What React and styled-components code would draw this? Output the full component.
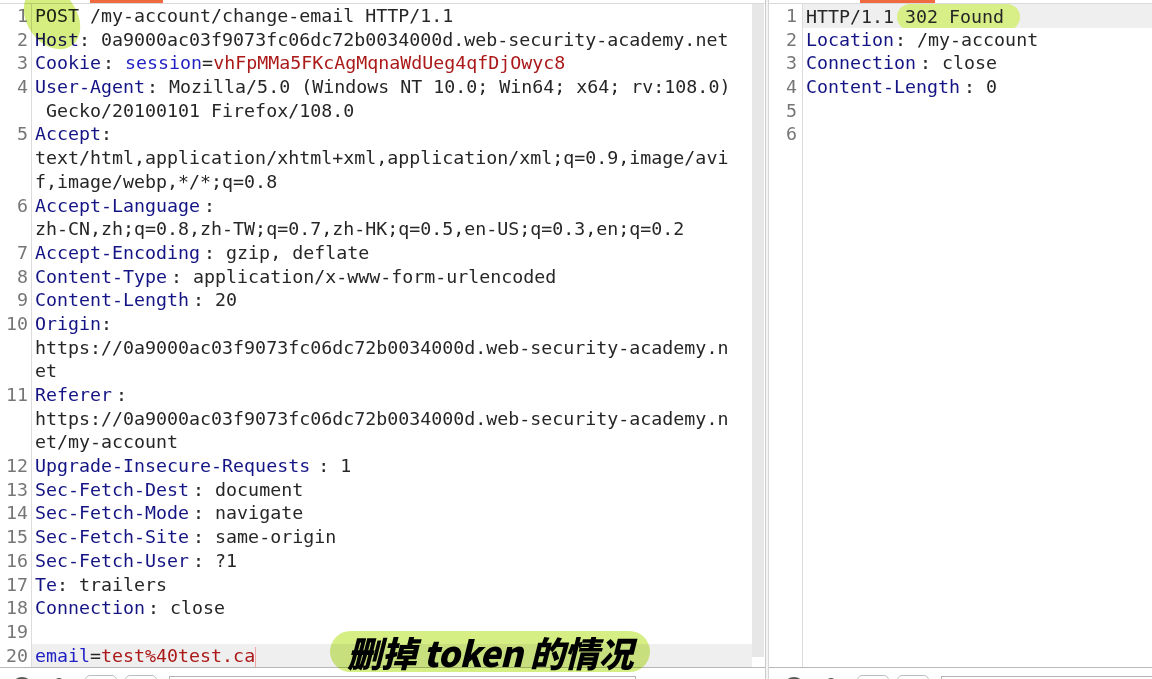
import React from "react";
import styled, { createGlobalStyle } from "styled-components";

const GlobalStyle = createGlobalStyle`
  html, body {
    margin: 0;
    padding: 0;
    background: #fff;
    overflow: hidden;
  }
  #root {
    height: 679px;
  }
`;

const mono = `"DejaVu Sans Mono", "Liberation Mono", monospace`;
const ROW = 23.7;

const Frame = styled.div`
  position: relative;
  display: flex;
  width: 1152px;
  height: 679px;
  overflow: hidden;
  background: #fff;
`;

const Panel = styled.section`
  display: flex;
  flex-direction: column;
  width: ${(p) => (p.$width ? `${p.$width}px` : "auto")};
  flex: ${(p) => (p.$width ? "none" : 1)};
  min-width: 0;
`;

const Divider = styled.div`
  width: 2px;
  flex: none;
  background: #f4f4f4;
  border-left: 1px solid #cbcbcb;
  border-right: 1px solid #d6d6d6;
`;

const TabEdge = styled.div`
  height: 3px;
  display: flex;
  flex: none;
`;

const Indicator = styled.div`
  margin-left: ${(p) => p.$left}px;
  width: ${(p) => p.$width}px;
  height: 3px;
  background: #f06a3f;
`;

const Editor = styled.div`
  display: flex;
  flex: none;
  height: 663px;
  border-top: 1px solid #dadada;
  overflow: hidden;
`;

const Lines = styled.div`
  flex: 1;
  min-width: 0;
  display: flex;
  flex-direction: column;
  background: linear-gradient(
    to right,
    transparent ${(p) => p.$gutter - 1}px,
    #dcdcdc ${(p) => p.$gutter - 1}px,
    #dcdcdc ${(p) => p.$gutter}px,
    transparent ${(p) => p.$gutter}px
  );
`;

const Scrollbar = styled.div`
  width: 12px;
  margin-right: 1px;
  margin-bottom: 10px;
  background: #e7e7e7;
`;

const Row = styled.div`
  display: grid;
  grid-template-columns: ${(p) => p.$gutter}px 1fr;
  height: ${ROW}px;
  line-height: ${ROW}px;
  font-family: ${mono};
  font-size: 18.3px;
  flex: none;
`;

const LineNo = styled.div`
  text-align: right;
  padding-right: ${(p) => p.$pad}px;
  color: #767676;
`;

const Code = styled.div`
  padding-left: 3px;
  white-space: pre;
  color: #262626;
  background: ${(p) => (p.$active ? "#efefef" : "transparent")};
  overflow: hidden;
`;

const Key = styled.span`
  color: #141485;
  margin-right: ${(p) => (p.$gap ?? 4)}px;
`;

const Param = styled.span`
  color: #1f1fc4;
`;

const Val = styled.span`
  color: #ab1919;
`;

const Caret = styled.span`
  display: inline-block;
  width: 0;
  height: 20px;
  vertical-align: middle;
  border-left: 1px solid #f0a4a4;
`;

const Mark = styled.span`
  display: inline-block;
  height: 26px;
  line-height: 26px;
  padding: 0 16px 0 8px;
  margin: 0 -16px 0 -8px;
  border-radius: 13px;
  background: #d8ee86;
`;

const BottomBar = styled.div`
  display: flex;
  align-items: flex-start;
  gap: 8px;
  height: 40px;
  padding: 7px 0 0 ${(p) => p.$pad}px;
  border-top: 1px solid #b8b8b8;
  flex: none;
`;

const HelpIcon = styled.div`
  width: 18px;
  height: 18px;
  margin-top: 2px;
  border-radius: 50%;
  border: 2px solid #5a5a5a;
  flex: none;
`;

const GearIcon = styled.div`
  width: 8px;
  height: 8px;
  margin: 3px 14px 0 14px;
  border-radius: 50%;
  background: #555;
  flex: none;
`;

const NavButton = styled.div`
  width: 30px;
  height: 26px;
  border: 1px solid #bdbdbd;
  border-radius: 5px;
  flex: none;
`;

const Search = styled.div`
  width: ${(p) => p.$width}px;
  height: 26px;
  margin-top: 1px;
  margin-left: 4px;
  border: 1px solid #b3b3b3;
  flex: none;
`;

const Blob = styled.div`
  position: absolute;
  left: 27px;
  top: -16px;
  width: 50px;
  height: 68px;
  border-radius: 50%;
  transform: rotate(-35deg);
  background: rgba(204, 232, 96, 0.8);
  mix-blend-mode: multiply;
  pointer-events: none;
`;

const Note = styled.div`
  position: absolute;
  left: 330px;
  top: 631px;
  width: 320px;
  height: 41px;
  border-radius: 21px;
  display: flex;
  align-items: center;
  justify-content: center;
  background: rgba(206, 236, 112, 0.85);
  mix-blend-mode: multiply;
  font-family: "Noto Sans CJK SC", "Noto Sans", sans-serif;
  font-weight: 900;
  font-style: italic;
  font-size: 35px;
  color: #000;
  letter-spacing: -0.6px;
`;

const host = "0a9000ac03f9073fc06dc72b0034000d.web-security-academy.n";

const request = [
  { n: 1, c: "POST /my-account/change-email HTTP/1.1" },
  { n: 2, k: "Host", g: 0, c: ": 0a9000ac03f9073fc06dc72b0034000d.web-security-academy.net" },
  {
    n: 3,
    k: "Cookie",
    g: 2,
    c: (
      <>
        : <Param>session</Param>=<Val>vhFpMMa5FKcAgMqnaWdUeg4qfDjOwyc8</Val>
      </>
    ),
  },
  { n: 4, k: "User-Agent", g: 2, c: ": Mozilla/5.0 (Windows NT 10.0; Win64; x64; rv:108.0)" },
  { c: " Gecko/20100101 Firefox/108.0" },
  { n: 5, k: "Accept", g: 0, c: ":" },
  { c: "text/html,application/xhtml+xml,application/xml;q=0.9,image/avi" },
  { c: "f,image/webp,*/*;q=0.8" },
  { n: 6, k: "Accept-Language", c: ":" },
  { c: "zh-CN,zh;q=0.8,zh-TW;q=0.7,zh-HK;q=0.5,en-US;q=0.3,en;q=0.2" },
  { n: 7, k: "Accept-Encoding", c: ": gzip, deflate" },
  { n: 8, k: "Content-Type", c: ": application/x-www-form-urlencoded" },
  { n: 9, k: "Content-Length", c: ": 20" },
  { n: 10, k: "Origin", g: 0, c: ":" },
  { c: `https://${host}` },
  { c: "et" },
  { n: 11, k: "Referer", c: ":" },
  { c: `https://${host}` },
  { c: "et/my-account" },
  { n: 12, k: "Upgrade-Insecure-Requests", g: 8, c: ": 1" },
  { n: 13, k: "Sec-Fetch-Dest", c: ": document" },
  { n: 14, k: "Sec-Fetch-Mode", c: ": navigate" },
  { n: 15, k: "Sec-Fetch-Site", c: ": same-origin" },
  { n: 16, k: "Sec-Fetch-User", c: ": ?1" },
  { n: 17, k: "Te", g: 0, c: ": trailers" },
  { n: 18, k: "Connection", g: 3, c: ": close" },
  { n: 19, c: "" },
  {
    n: 20,
    active: true,
    c: (
      <>
        <Param>email</Param>=<Val>test%40test.ca</Val>
        <Caret />
      </>
    ),
  },
];

const response = [
  {
    n: 1,
    active: true,
    c: (
      <>
        HTTP/1.1 <Mark>302 Found</Mark>
      </>
    ),
  },
  { n: 2, k: "Location", g: 1, c: ": /my-account" },
  { n: 3, k: "Connection", c: ": close" },
  { n: 4, k: "Content-Length", c: ": 0" },
  { n: 5, c: "" },
  { n: 6, c: "" },
];

function CodeLines({ rows, gutter, pad }) {
  return (
    <Lines $gutter={gutter}>
      {rows.map((r, i) => (
        <Row key={i} $gutter={gutter}>
          <LineNo $pad={pad}>{r.n ?? ""}</LineNo>
          <Code $active={r.active}>
            {r.k && <Key $gap={r.g}>{r.k}</Key>}
            {r.c}
          </Code>
        </Row>
      ))}
    </Lines>
  );
}

function Toolbar({ pad, search }) {
  return (
    <BottomBar $pad={pad}>
      <HelpIcon />
      <GearIcon />
      <NavButton />
      <NavButton />
      <Search $width={search} />
    </BottomBar>
  );
}

export default function App() {
  return (
    <>
      <GlobalStyle />
      <Frame>
        <Panel $width={765}>
          <TabEdge>
            <Indicator $left={90} $width={73} />
          </TabEdge>
          <Editor>
            <CodeLines rows={request} gutter={32} pad={4} />
            <Scrollbar />
          </Editor>
          <Toolbar pad={11} search={465} />
        </Panel>
        <Divider />
        <Panel>
          <TabEdge>
            <Indicator $left={91} $width={75} />
          </TabEdge>
          <Editor>
            <CodeLines rows={response} gutter={34} pad={6} />
          </Editor>
          <Toolbar pad={14} search={400} />
        </Panel>
        <Blob />
        <Note>删掉 token 的情况</Note>
      </Frame>
    </>
  );
}
